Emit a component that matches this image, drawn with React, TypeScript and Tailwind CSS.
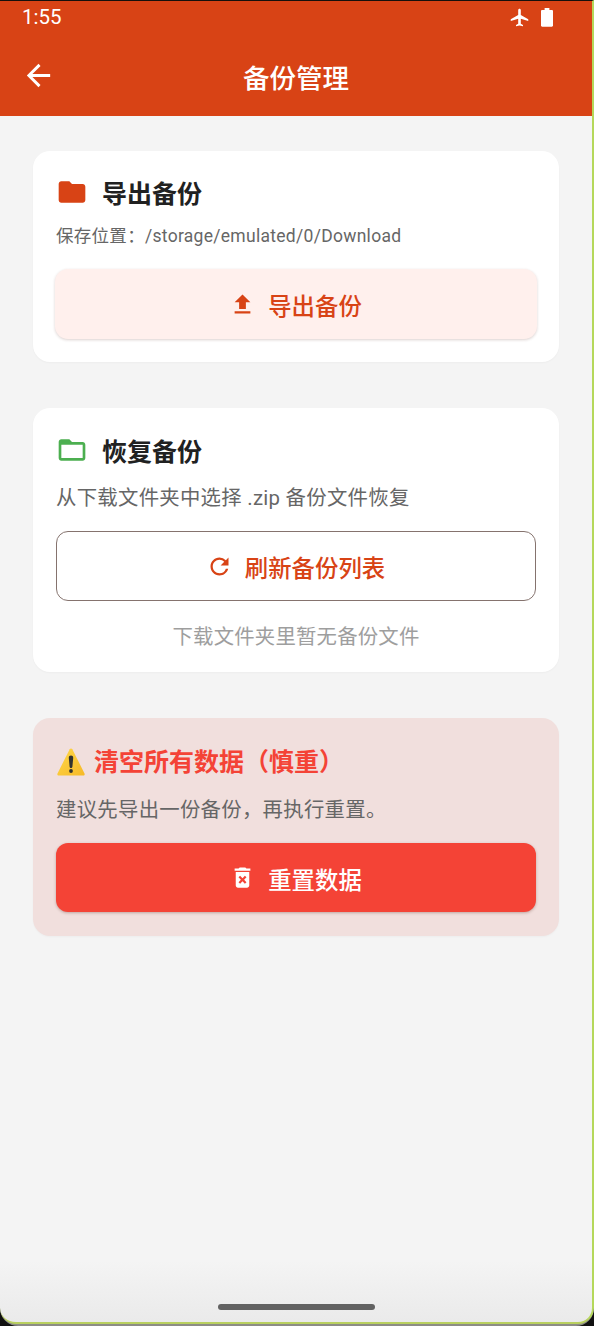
import type { ReactNode } from "react";
import {
  MdAirplanemodeActive,
  MdArrowBack,
  MdDeleteForever,
  MdFolder,
  MdFolderOpen,
  MdRefresh,
  MdUpload,
} from "react-icons/md";

type CardProps = {
  className: string;
  children: ReactNode;
};

function Card({ className, children }: CardProps) {
  return (
    <section
      className={`flex w-[526px] flex-col rounded-[17px] px-[23px] shadow-[0_1px_2px_rgba(0,0,0,0.03)] ${className}`}
    >
      {children}
    </section>
  );
}

function WarningIcon() {
  return (
    <svg width="28" height="28" viewBox="0 0 28 28" className="mt-[2px] shrink-0">
      <defs>
        <linearGradient id="warn" x1="0" y1="0" x2="1" y2="1">
          <stop offset="0" stopColor="#ffd84a" />
          <stop offset="1" stopColor="#f6b927" />
        </linearGradient>
      </defs>
      <path
        d="M12.7 1.2c.6-1 2-1 2.6 0l12.2 24.2c.5 1-.1 2.1-1.2 2.1H1.7c-1.1 0-1.7-1.1-1.2-2.1z"
        fill="url(#warn)"
      />
      <path
        d="M14 7.6c1.4 0 2.3 1 2.2 2.3l-.8 8.900c-.1 1.700-2.700 1.700-2.800 0l-.8-8.900c-.1-1.300.8-2.300 2.200-2.300z"
        fill="#33332f"
      />
      <circle cx="14" cy="23" r="1.9" fill="#33332f" />
    </svg>
  );
}

function BatteryIcon() {
  return (
    <svg width="12" height="19" viewBox="0 0 12 19" fill="currentColor">
      <path d="M3.6 0h4.8v2h2.4c.7 0 1.2.5 1.2 1.2v14.4c0 .7-.5 1.2-1.2 1.2H1.2C.5 18.8 0 18.3 0 17.6V3.2C0 2.5.5 2 1.2 2h2.4z" />
    </svg>
  );
}

function StatusBar() {
  return (
    <div className="flex h-[34px] items-start justify-between pl-[22px] pr-[39px]">
      <span className="text-[20.5px] leading-[33px]">1:55</span>
      <div className="flex h-[33px] items-center gap-[11px]">
        <MdAirplanemodeActive size={21} />
        <BatteryIcon />
      </div>
    </div>
  );
}

export default function App() {
  return (
    <div className="h-[1326px] w-[594px] overflow-hidden bg-[#111] font-['Roboto','Noto_Sans_CJK_SC',sans-serif]">
      <div className="h-[1326px] overflow-hidden rounded-b-[18px] bg-[#8c8c86]">
        <div className="flex h-[1324px] w-[594px] flex-col overflow-hidden rounded-b-[16px] border-b-2 border-r-2 border-t border-b-[#b9d05f] border-r-[#b5d85b] border-t-[#15100c] bg-[linear-gradient(#f4f4f4_0_1260px,#eaeaea)]">
          <header className="h-[115px] shrink-0 bg-[#d84315] text-white">
            <StatusBar />
            <div className="flex h-[81px] items-center pl-[21px]">
              <MdArrowBack size={35} />
              <h1 className="flex-1 pr-[56px] pt-[6px] text-center text-[26.5px] font-medium leading-[40px]">
                备份管理
              </h1>
            </div>
          </header>

          <main className="flex flex-1 flex-col gap-[46px] pl-[33px] pt-[35px]">
            <Card className="h-[211px] bg-white">
              <div className="mt-[21px] flex h-[40px] items-center gap-[14px]">
                <MdFolder size={32} className="text-[#d84315]" />
                <h2 className="pt-[5px] text-[25px] font-bold leading-[40px] text-[#212121]">导出备份</h2>
              </div>
              <p className="mt-[10px] text-[17.5px] leading-[28px] tracking-[0.29px] text-[#666]">
                保存位置：/storage/emulated/0/Download
              </p>
              <button className="-mx-px mt-[19px] flex h-[70px] items-center justify-center gap-[12px] rounded-[13px] bg-[#fff0ed] pr-px text-[23.4px] font-medium text-[#d84315] shadow-[0_1px_3px_rgba(80,30,20,0.2)]">
                <MdUpload size={27} />
                <span className="pt-[8px]">导出备份</span>
              </button>
            </Card>

            <Card className="h-[264px] bg-white">
              <div className="mt-[22px] flex h-[40px] items-center gap-[14px]">
                <MdFolderOpen size={32} className="text-[#4caf50]" />
                <h2 className="pt-[6px] text-[25px] font-bold leading-[40px] text-[#212121]">恢复备份</h2>
              </div>
              <p className="mt-[12px] text-[20.4px] leading-[32px] tracking-[0.27px] text-[#666]">
                从下载文件夹中选择 .zip 备份文件恢复
              </p>
              <button className="mt-[17px] flex h-[70px] items-center justify-center gap-[12px] rounded-[12px] border-[1.5px] border-[#85736e] pr-px text-[23.4px] font-medium text-[#d84315]">
                <MdRefresh size={27} />
                <span className="pt-[8px]">刷新备份列表</span>
              </button>
              <p className="mt-[20px] text-center text-[20.4px] leading-[32px] tracking-[0.2px] text-[#9e9e9e]">
                下载文件夹里暂无备份文件
              </p>
            </Card>

            <Card className="h-[218px] bg-[#f1dfdd]">
              <div className="mt-[23px] flex h-[40px] items-center gap-[9px] pl-px">
                <WarningIcon />
                <h2 className="pt-[4px] text-[25px] font-bold leading-[40px] text-[#f44336]">
                  清空所有数据（慎重）
                </h2>
              </div>
              <p className="mt-[13px] text-[20.4px] leading-[32px] tracking-[0.27px] text-[#666]">
                建议先导出一份备份，再执行重置。
              </p>
              <button className="mt-[17px] flex h-[69px] items-center justify-center gap-[12px] rounded-[12px] bg-[#f44336] pr-px text-[23.4px] font-medium text-white shadow-[0_1px_3px_rgba(80,30,20,0.3)]">
                <MdDeleteForever size={27} />
                <span className="pt-[8px]">重置数据</span>
              </button>
            </Card>
          </main>

          {/* gesture bar */}
          <div className="mb-[12px] ml-[218px] h-[6px] w-[157px] shrink-0 rounded-full bg-[#626262]" />
        </div>
      </div>
    </div>
  );
}
